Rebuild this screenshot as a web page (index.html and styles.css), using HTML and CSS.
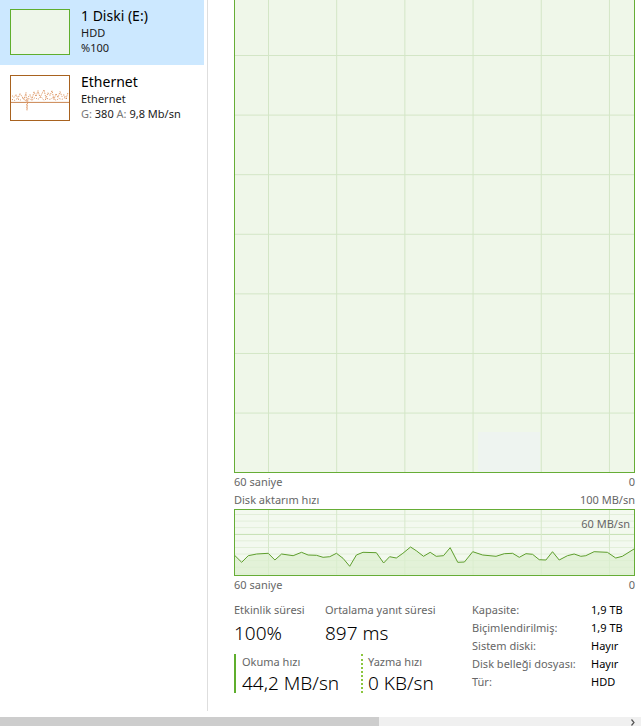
FILE: index.html
```html
<!DOCTYPE html>
<html lang="tr">
  <head>
    <meta charset="UTF-8" />
    <meta name="viewport" content="width=device-width, initial-scale=1.0" />
    <title>Görev Yöneticisi - Performans</title>
    <link rel="stylesheet" href="styles.css">
  </head>
  <body>
    <section class="app">
      <nav class="sidebar">
        <div class="device selected">
          <div class="thumb thumb-disk"></div>
          <div class="device-info">
            <div class="device-name">1 Diski (E:)</div>
            <div class="device-sub">HDD</div>
            <div class="device-sub">%100</div>
          </div>
        </div>
        <div class="device device-eth">
          <div class="thumb thumb-eth">
            <svg viewBox="0 0 58 45" preserveAspectRatio="none">
              <line x1="0" y1="27" x2="58" y2="27" stroke="#c9844f" stroke-width="1" />
              <polyline fill="none" stroke="#e09c6c" stroke-width="1" stroke-dasharray="1.5 1"
                points="1,20 3,22 5,19 7,23 9,18 11,21 13,24 15,17 16,35 17,22 19,19 21,24 23,16 25,21 27,15 29,22 31,18 33,14 35,23 37,17 39,20 41,15 43,24 45,18 47,22 49,16 51,21 53,19 55,23 57,17" />
              <polyline fill="none" stroke="#d2804a" stroke-width="1" stroke-dasharray="1 1.5"
                points="1,24 4,25 6,23 9,25 12,22 15,26 18,23 21,25 24,22 27,24 30,21 33,25 36,23 39,24 42,22 45,25 48,23 51,24 54,22 57,24" />
            </svg>
          </div>
          <div class="device-info">
            <div class="device-name">Ethernet</div>
            <div class="device-sub">Ethernet</div>
            <div class="device-sub"><span class="dim">G:</span> 380 <span class="dim">A:</span> 9,8 Mb/sn</div>
          </div>
        </div>
      </nav>

      <main class="content">
        <div class="chart-big"></div>
        <div class="axis-row">
          <span>60 saniye</span>
          <span>0</span>
        </div>
        <div class="axis-row">
          <span>Disk aktarım hızı</span>
          <span>100 MB/sn</span>
        </div>
        <div class="chart-small">
          <span class="chart-mark">60 MB/sn</span>
          <svg viewBox="0 0 400 65" preserveAspectRatio="none">
            <polygon fill="#dcefcf" fill-opacity="0.7"
              points="0,45.7 6.7,52.3 13.3,45.7 21.7,44 33.3,43.3 40,50 46.7,44 58.3,45.7 66.7,42.3 73.3,45 81.7,45.3 88.3,47.3 95,46.7 101.7,43.3 108.3,48.3 115,56.3 121.7,45 128.3,42.3 141.7,42.7 149,53 155,46.7 161.7,48 168.3,43.3 176,37 181.7,40.7 189,46.3 195.7,42.3 201.7,46.3 209,45.7 215.7,37.7 223.3,52.3 230,52 238.3,41.7 248.3,45 261.7,46.3 270,43.7 278.3,43.3 285,47.3 291.7,43.7 298.3,44.3 305,49.7 311.7,50 318.3,41.7 325,50 333.3,45.7 340,44 346.7,46.3 351.7,45.7 360,41.7 373.3,42.3 381.7,48 388.3,46.3 400,39 400,65 0,65" />
            <polyline fill="none" stroke="#5d9e2c" stroke-width="1"
              points="0,45.7 6.7,52.3 13.3,45.7 21.7,44 33.3,43.3 40,50 46.7,44 58.3,45.7 66.7,42.3 73.3,45 81.7,45.3 88.3,47.3 95,46.7 101.7,43.3 108.3,48.3 115,56.3 121.7,45 128.3,42.3 141.7,42.7 149,53 155,46.7 161.7,48 168.3,43.3 176,37 181.7,40.7 189,46.3 195.7,42.3 201.7,46.3 209,45.7 215.7,37.7 223.3,52.3 230,52 238.3,41.7 248.3,45 261.7,46.3 270,43.7 278.3,43.3 285,47.3 291.7,43.7 298.3,44.3 305,49.7 311.7,50 318.3,41.7 325,50 333.3,45.7 340,44 346.7,46.3 351.7,45.7 360,41.7 373.3,42.3 381.7,48 388.3,46.3 400,39" />
          </svg>
        </div>
        <div class="axis-row">
          <span>60 saniye</span>
          <span>0</span>
        </div>

        <div class="stats">
          <div class="stats-left">
            <div class="stat-pair">
              <div class="stat">
                <div class="stat-label">Etkinlik süresi</div>
                <div class="stat-value">100%</div>
              </div>
              <div class="stat">
                <div class="stat-label">Ortalama yanıt süresi</div>
                <div class="stat-value">897 ms</div>
              </div>
            </div>
            <div class="stat-pair rates">
              <div class="stat stat-read">
                <div class="stat-label">Okuma hızı</div>
                <div class="stat-value">44,2 MB/sn</div>
              </div>
              <div class="stat stat-write">
                <div class="stat-label">Yazma hızı</div>
                <div class="stat-value">0 KB/sn</div>
              </div>
            </div>
          </div>
          <dl class="props">
            <dt>Kapasite:</dt><dd>1,9 TB</dd>
            <dt>Biçimlendirilmiş:</dt><dd>1,9 TB</dd>
            <dt>Sistem diski:</dt><dd>Hayır</dd>
            <dt>Disk belleği dosyası:</dt><dd>Hayır</dd>
            <dt>Tür:</dt><dd>HDD</dd>
          </dl>
        </div>
      </main>
    </section>

    <div class="hscroll">
      <div class="hscroll-thumb"></div>
      <svg class="hscroll-arrow" viewBox="0 0 6 9">
        <polyline points="1.5,1.5 4,4.5 1.5,7.5" fill="none" stroke="#555" stroke-width="1.2" />
      </svg>
    </div>
  </body>
</html>
```

FILE: styles.css
```css
* {
  margin: 0;
  padding: 0;
  box-sizing: border-box;
}

body {
  font-family: "Noto Sans", "Open Sans", sans-serif;
  color: #000;
  background: #fff;
  width: 641px;
  height: 726px;
  overflow: hidden;
}

.app {
  display: flex;
  height: 717px;
}

/* lista de dispositivos a la izquierda */
.sidebar {
  width: 208px;
  height: 711px;
  border-right: 1px solid #dedede;
  flex-shrink: 0;
}

.device {
  display: flex;
  width: 204px;
  height: 66px;
  padding: 9px 0 0 10px;
}

.device.selected {
  background-color: #cce8ff;
  height: 65px;
}

.device-eth {
  padding-top: 10px;
}

.thumb {
  width: 60px;
  height: 46px;
  flex-shrink: 0;
}

.thumb-disk {
  border: 1px solid #5fae2d;
  background-color: #eef6ea;
}

.thumb-eth {
  border: 1px solid #a8621f;
  background-color: #fff;
}

.thumb-eth svg {
  display: block;
  width: 100%;
  height: 100%;
}

.device-info {
  padding-left: 11px;
  margin-top: -3px;
}

.device-name {
  font-size: 14px;
  line-height: 19px;
}

.device-sub {
  font-size: 11px;
  line-height: 15px;
  color: #1a1a1a;
}

.dim {
  color: #777;
}

/* zona de graficas */
.content {
  padding-left: 26px;
  width: 427px;
}

.chart-big {
  width: 401px;
  height: 478px;
  margin-top: -5px;
  border: 1px solid #66ad36;
  background-color: #eff7e9;
  background-image:
    linear-gradient(to right, #d3e6c6 1px, transparent 1px),
    linear-gradient(to bottom, #d3e6c6 1px, transparent 1px),
    linear-gradient(#eef4f0, #eef4f0);
  background-size: 68.2px 100%, 100% 59.6px, 62px 40px;
  background-position: 33px 0, 0 59px, 243px 436px;
  background-repeat: repeat, repeat, no-repeat;
}

.axis-row {
  display: flex;
  justify-content: space-between;
  font-size: 11px;
  line-height: 18px;
  color: #666;
  width: 401px;
}

.chart-small {
  position: relative;
  width: 401px;
  height: 67px;
  border: 1px solid #66ad36;
  background-color: #f3f9ef;
  background-image:
    linear-gradient(to right, #d6e8ca 1px, transparent 1px),
    linear-gradient(to bottom, #c9e2b8 1px, transparent 1px),
    linear-gradient(to bottom, #e1eed8 1px, transparent 1px);
  background-size: 68.2px 100%, 100% 100%, 100% 6.6px;
  background-position: 33px 0, 0 24px, 0 4px;
  background-repeat: repeat, no-repeat, repeat;
}

.chart-small svg {
  display: block;
  width: 100%;
  height: 100%;
}

.chart-mark {
  position: absolute;
  top: 6px;
  right: 4px;
  font-size: 11px;
  color: #666;
}

/* datos de abajo */
.stats {
  display: flex;
  padding-top: 7px;
}

.stats-left {
  width: 238px;
}

.stat-pair {
  display: flex;
}

.stat {
  width: 91px;
}

.stat + .stat {
  width: 140px;
}

.stat-label {
  font-size: 11px;
  line-height: 18px;
  color: #666;
}

.stat-value {
  font-size: 19px;
  line-height: 28px;
  font-weight: 300;
}

.rates {
  margin-top: 7px;
}

.rates .stat-label {
  line-height: 16px;
}

.rates .stat-value {
  line-height: 20px;
  margin-top: 3px;
}

.stat-read {
  width: 127px;
  border-left: 2px solid #5fae2d;
  padding-left: 6px;
}

.stat-read + .stat-write {
  width: 110px;
  border-left: 2px dotted #8cc63f;
  padding-left: 5px;
}

.props {
  display: grid;
  grid-template-columns: 119px auto;
  grid-auto-rows: 18px;
  font-size: 11px;
  line-height: 18px;
}

.props dt {
  color: #666;
}

.props dd {
  color: #000;
}

/* barra de desplazamiento horizontal */
.hscroll {
  display: flex;
  height: 9px;
  background-color: #f0f0f0;
  position: relative;
}

.hscroll-thumb {
  width: 379px;
  height: 100%;
  background-color: #cdcdcd;
}

.hscroll-arrow {
  position: absolute;
  right: 5px;
  top: 1px;
  width: 6px;
  height: 9px;
}
```
